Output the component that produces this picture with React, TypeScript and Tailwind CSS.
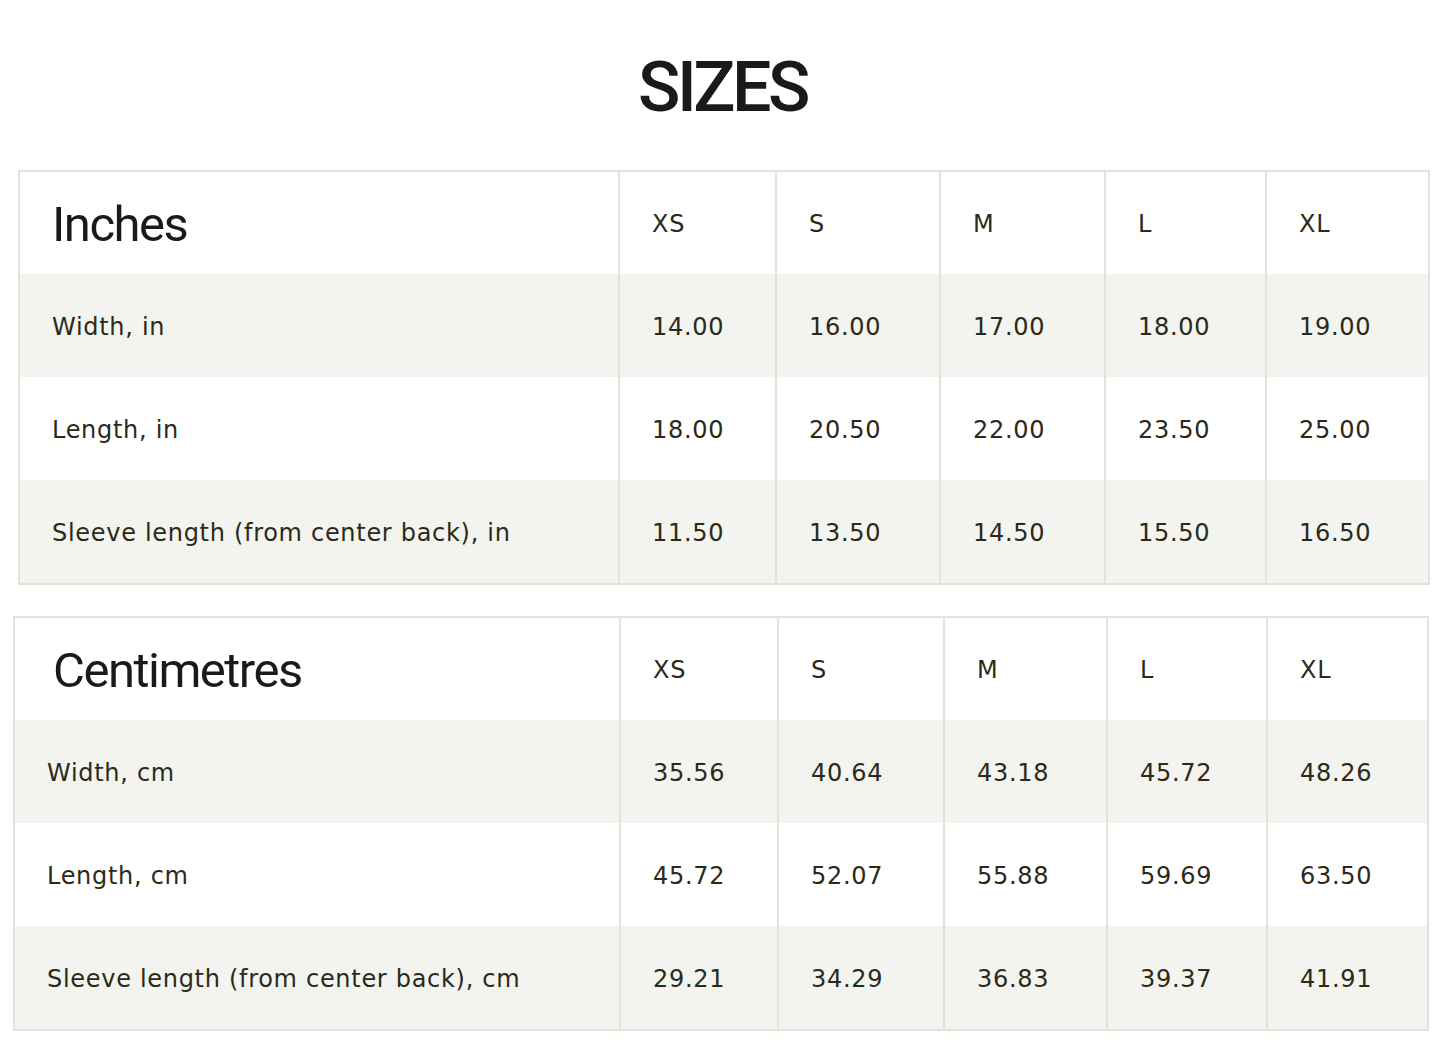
const inches = {
  title: 'Inches',
  unit: 'in',
  rows: [
    { label: 'Width, in', values: ['14.00', '16.00', '17.00', '18.00', '19.00'] },
    { label: 'Length, in', values: ['18.00', '20.50', '22.00', '23.50', '25.00'] },
    { label: 'Sleeve length (from center back), in', values: ['11.50', '13.50', '14.50', '15.50', '16.50'] },
  ],
};

const centimetres = {
  title: 'Centimetres',
  unit: 'cm',
  rows: [
    { label: 'Width, cm', values: ['35.56', '40.64', '43.18', '45.72', '48.26'] },
    { label: 'Length, cm', values: ['45.72', '52.07', '55.88', '59.69', '63.50'] },
    { label: 'Sleeve length (from center back), cm', values: ['29.21', '34.29', '36.83', '39.37', '41.91'] },
  ],
};

const sizes = ['XS', 'S', 'M', 'L', 'XL'];

type Table = typeof inches;

function SizeTable({ data, cols, wrap, headPad, firstPad }: { data: Table; cols: string; wrap: string; headPad: string; firstPad: string }) {
  const body = "font-['DejaVu_Sans',sans-serif] text-[24px] tracking-[0.7px] text-[#2b2a18] pt-[2px]";
  return (
    <div className={`${wrap} border-2 border-[#e3e3dc] bg-white`}>
      {/* header */}
      <div className={`grid ${cols} h-[102px]`}>
        <div className={`flex items-center ${headPad}`}>
          <span className="font-['Roboto',sans-serif] text-[49px] tracking-[-1.5px] text-[#1a1a1a] pt-[4px]">{data.title}</span>
        </div>
        {sizes.map((s) => (
          <div key={s} className={`flex items-center pl-[32px] border-l-2 border-[#e3e3dc] ${body}`}>
            {s}
          </div>
        ))}
      </div>
      {data.rows.map((row, i) => (
        <div key={row.label} className={`grid ${cols} h-[103px] ${i % 2 === 0 ? 'bg-[#f3f3ef]' : 'bg-white'}`}>
          <div className={`flex items-center ${firstPad} ${body}`}>{row.label}</div>
          {row.values.map((v, j) => (
            <div key={j} className={`flex items-center pl-[32px] border-l-2 border-[#e3e3dc] ${body}`}>
              {v}
            </div>
          ))}
        </div>
      ))}
    </div>
  );
}

export default function App() {
  return (
    <div className="w-[1445px] min-h-[1049px] bg-white pt-[52px]">
      <h1 className="h-[70px] leading-[70px] text-center font-['Roboto',sans-serif] font-medium text-[70px] tracking-[-3.5px] text-[#1a1a1a] mb-[48px]">
        SIZES
      </h1>
      <SizeTable
        data={inches}
        cols="grid-cols-[598px_157px_164px_165px_161px_164px]"
        wrap="ml-[18px] w-[1412px]"
        headPad="pl-[32px]"
        firstPad="pl-[32px]"
      />
      <div className="h-[31px]" />
      <SizeTable
        data={centimetres}
        cols="grid-cols-[604px_158px_166px_163px_160px_161px]"
        wrap="ml-[13px] w-[1416px]"
        headPad="pl-[38px]"
        firstPad="pl-[32px]"
      />
    </div>
  );
}
